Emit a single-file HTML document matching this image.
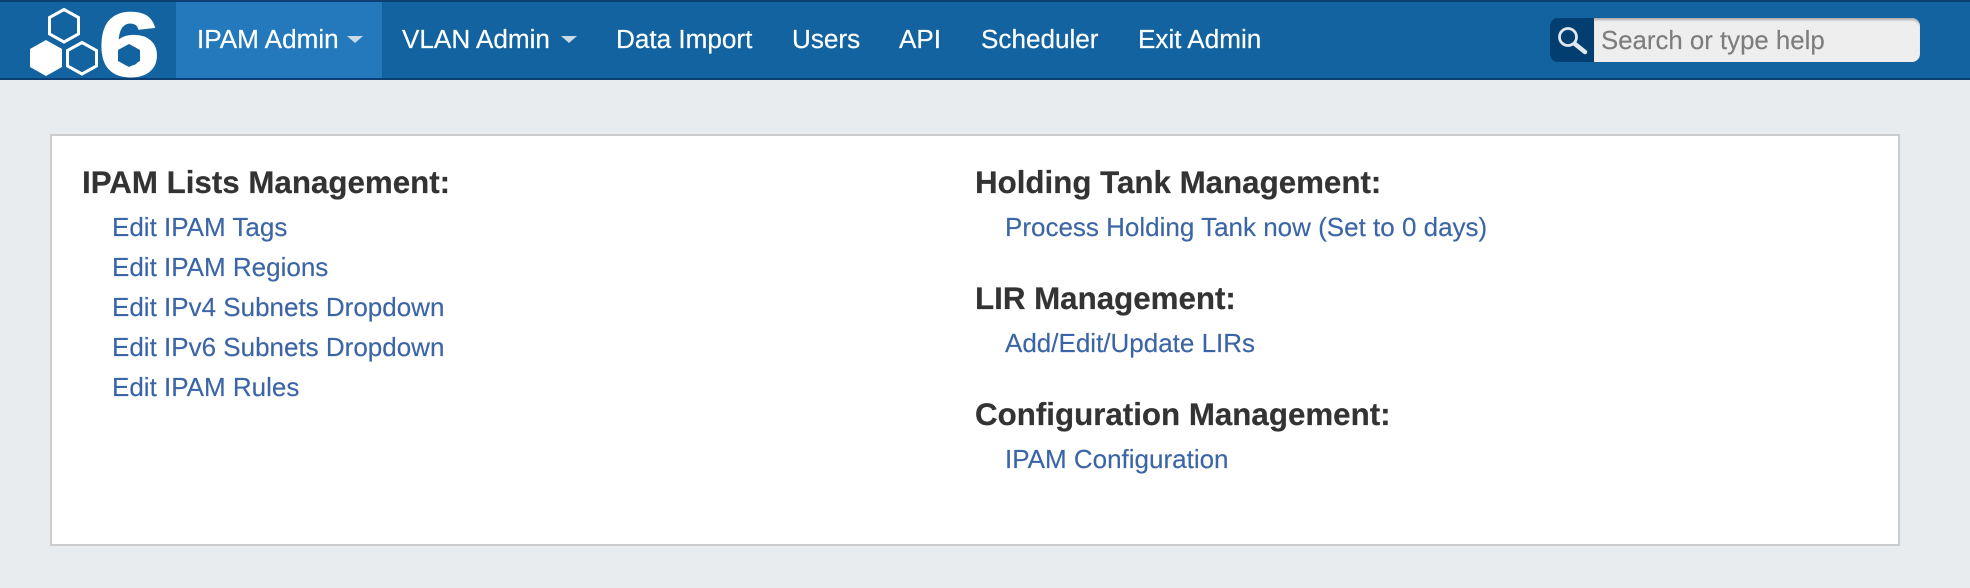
<!DOCTYPE html>
<html>
<head>
<meta charset="utf-8">
<style>
html,body{margin:0;padding:0;width:1970px;height:588px;overflow:hidden;background:#e9ecef;font-family:"Liberation Sans",Arial,sans-serif}
#nav{position:absolute;left:0;top:0;width:1970px;height:80px;background:#12639f;border-top:2px solid #0f3f72;border-bottom:2px solid #0f3f72;box-sizing:border-box}
#active{position:absolute;left:176px;top:2px;width:206px;height:76px;background:#2479bd}
.n,.h,.l{position:absolute;white-space:nowrap;line-height:30px;height:30px}
.n{color:#fff;font-size:26.1px;top:24px;-webkit-text-stroke:.2px #fff}
.c{position:absolute;top:36px;width:0;height:0;border-left:8px solid transparent;border-right:8px solid transparent;border-top:7px solid #c9d9e6}
.h{color:#333;font-weight:bold;font-size:31.3px;-webkit-text-stroke:.2px #333}
.l{color:#3b65a6;font-size:26px;-webkit-text-stroke:.15px #3b65a6}
#panel{position:absolute;left:50px;top:134px;width:1850px;height:412px;box-sizing:border-box;background:#fff;border:2px solid #ccc}
#sicon{position:absolute;left:1550px;top:18px;width:44px;height:44px;background:#023f70;border-radius:8px 0 0 8px}
#sbox{position:absolute;left:1594px;top:18px;width:326px;height:44px;box-sizing:border-box;background:#eee;border-radius:0 8px 8px 0;box-shadow:inset 0 3px 2px -1px #aaa}
#stext{position:absolute;left:1601px;top:26px;line-height:30px;font-size:25.8px;color:#7d7d7d;white-space:nowrap;-webkit-text-stroke:.15px #7d7d7d}
svg{position:absolute}
</style>
</head>
<body>
<div id="nav"></div>
<div id="active"></div>
<svg style="left:20px;top:0" width="150" height="78" viewBox="20 0 150 78">
<polygon points="64,9.5 78.5,17.5 78.5,34 64,42 49.5,34 49.5,17.5" fill="none" stroke="#fff" stroke-width="3"/>
<polygon points="46,40 62,49 62,67 46,76 30,67 30,49" fill="#fff"/>
<polygon points="82,42.5 96.5,50.5 96.5,66 82,74 67.5,66 67.5,50.5" fill="none" stroke="#fff" stroke-width="3"/>
<text transform="translate(98.6,75.5) scale(1.22,1)" font-family="Liberation Sans" font-weight="bold" font-size="90" fill="#fff" stroke="#fff" stroke-width="2">6</text>
<polygon points="129,44 140,50 140,61 129,67 118,61 118,50" fill="#12639f"/>
</svg>
<div class="n" style="left:197px">IPAM Admin</div><div class="c" style="left:347px"></div>
<div class="n" style="left:402px">VLAN Admin</div><div class="c" style="left:561px"></div>
<div class="n" style="left:616px">Data Import</div>
<div class="n" style="left:792px">Users</div>
<div class="n" style="left:899px">API</div>
<div class="n" style="left:981px">Scheduler</div>
<div class="n" style="left:1138px">Exit Admin</div>
<div id="sicon"></div>
<svg style="left:1550px;top:18px" width="44" height="44" viewBox="0 0 44 44">
<circle cx="18" cy="19" r="8.5" fill="none" stroke="#e0e8ee" stroke-width="2.8"/>
<path d="M25 26L35 34" stroke="#e0e8ee" stroke-width="4.5" stroke-linecap="round"/>
</svg>
<div id="sbox"></div>
<div id="stext">Search or type help</div>
<div id="panel"></div>
<div class="h" style="left:82px;top:168px">IPAM Lists Management:</div>
<div class="l" style="left:112px;top:212px">Edit IPAM Tags</div>
<div class="l" style="left:112px;top:252px">Edit IPAM Regions</div>
<div class="l" style="left:112px;top:292px">Edit IPv4 Subnets Dropdown</div>
<div class="l" style="left:112px;top:332px">Edit IPv6 Subnets Dropdown</div>
<div class="l" style="left:112px;top:372px">Edit IPAM Rules</div>
<div class="h" style="left:975px;top:168px">Holding Tank Management:</div>
<div class="l" style="left:1005px;top:212px">Process Holding Tank now (Set to 0 days)</div>
<div class="h" style="left:975px;top:284px">LIR Management:</div>
<div class="l" style="left:1005px;top:328px">Add/Edit/Update LIRs</div>
<div class="h" style="left:975px;top:400px">Configuration Management:</div>
<div class="l" style="left:1005px;top:444px">IPAM Configuration</div>
</body>
</html>
